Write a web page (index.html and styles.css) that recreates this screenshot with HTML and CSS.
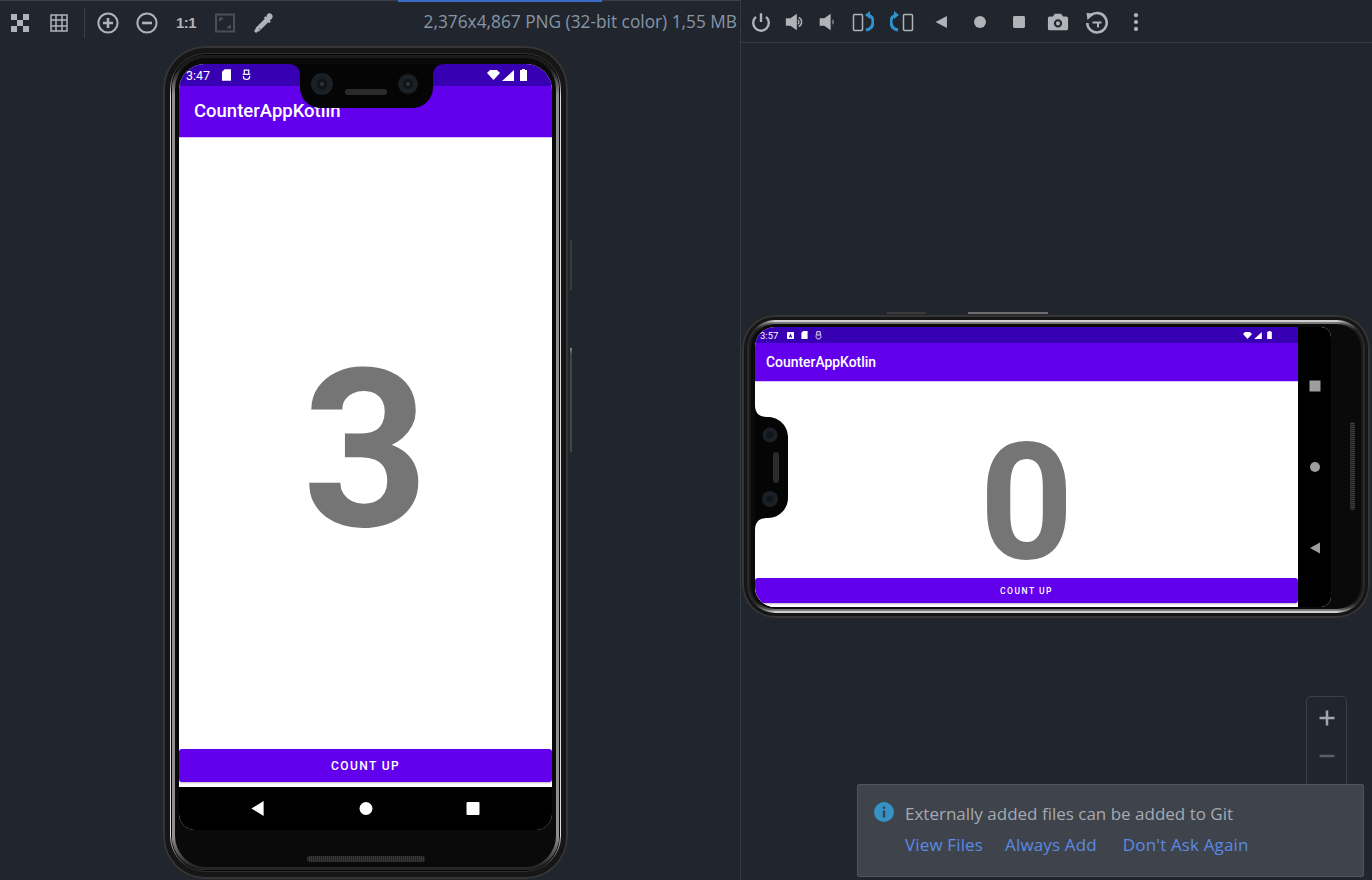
FILE: index.html
```html
<!DOCTYPE html>
<html lang="en">
<head>
<meta charset="utf-8">
<title>Device File Explorer</title>
<link rel="stylesheet" href="styles.css">
</head>
<body>
<div class="app">
  <section class="pane pane-left">
    <div class="accent"></div>
    <header class="toolbar toolbar-left">
      <svg class="tool" viewBox="0 0 24 24"><path class="fill" d="M3 3h6v6H3zM15 3h6v6h-6zM9 9h6v6H9zM3 15h6v6H3zM15 15h6v6h-6z"/></svg>
      <svg class="tool" viewBox="0 0 24 24"><path class="line thin" d="M4 4h16v16H4zM4 9h16M4 15h16M9 4v16M15 4v16"/></svg>
      <span class="sep"></span>
      <svg class="tool" viewBox="0 0 24 24"><circle class="line" cx="12" cy="12" r="9.600"/><path class="line heavy" d="M7 12h10M12 7v10"/></svg>
      <svg class="tool" viewBox="0 0 24 24"><circle class="line" cx="12" cy="12" r="9.600"/><path class="line heavy" d="M7 12h10"/></svg>
      <span class="tool one">1:1</span>
      <svg class="tool" viewBox="0 0 24 24"><path class="dim" d="M3 3.500h18v17H3z"/><path class="dim thin" d="M7 10V7.500h3M17 14v2.500h-3"/></svg>
      <svg class="tool" viewBox="0 0 24 24"><path class="fill" d="M15 3.500c1.500-1.700 3.500-1.500 4.700-.3 1.300 1.300 1.400 3.300-.2 4.800l-1.700 1.600 1 1-1.600 1.600-1-1L8 19.500c-.8.800-1.500 1-2.300 1.100L4 22l-2-2 1.400-1.700c.1-.8.300-1.500 1.100-2.300l8.300-8.200-1-1L13.400 5.200l1 1z"/><path class="cut" d="M7 17.800l.6-.6 1 1-.6.6z"/></svg>
      <span class="image-info">2,376x4,867 PNG (32-bit color) 1,55 MB</span>
    </header>
    <div class="stage stage-left">
      <div class="device portrait">
        <span class="side-key key-a"></span>
        <span class="side-key key-b"></span>
        <div class="band">
          <div class="rim">
            <div class="screen">
              <div class="status">
                <span class="clock">3:47</span>
                <svg class="st st-sd" viewBox="0 0 10 13"><path d="M3 0h7v13H0V3z"/></svg>
                <svg class="st st-usb" viewBox="0 0 10 13"><path d="M2.500 5.500V1h5v4.500M.8 5.800h8.400M1.500 7.500v1c0 2 1.500 3 3.500 3s3.500-1 3.500-3v-1" fill="none" stroke="#fff" stroke-width="1.300"/></svg>
                <span class="spacer"></span>
                <svg class="st st-wifi" viewBox="0 0 13 10"><path d="M0 3l3-3h7l3 3-6.500 7z"/></svg>
                <svg class="st st-signal" viewBox="0 0 12 11"><path d="M12 0v11H0z"/></svg>
                <svg class="st st-battery" viewBox="0 0 7 12"><path d="M2 0h3v1h2v11H0V1h2z"/></svg>
              </div>
              <div class="appbar">CounterAppKotlin</div>
              <main class="content">
                <div class="count">3</div>
                <div class="button">COUNT UP</div>
              </main>
              <nav class="navbar">
                <svg class="nav-icon" viewBox="0 0 14 16"><path d="M13 0v16L0 8z"/></svg>
                <svg class="nav-icon" viewBox="0 0 14 14"><circle cx="7" cy="7" r="6.500"/></svg>
                <svg class="nav-icon" viewBox="0 0 14 14"><rect x=".5" y=".5" width="13" height="13" rx="1"/></svg>
              </nav>
              <svg class="notch" viewBox="0 0 157 46">
                <path d="M0 0c8 0 12 4 12 12v11c0 12 9 21 21 21h91c12 0 21-9 21-21V12c0-8 4-12 12-12z"/>
                <circle class="lens" cx="34" cy="20" r="11"/><circle class="lens-in" cx="34" cy="20" r="5.500"/><circle class="lens-dot" cx="34" cy="20" r="2"/>
                <circle class="lens" cx="120" cy="20" r="10"/><circle class="lens-in" cx="120" cy="20" r="5"/><circle class="lens-dot" cx="120" cy="20" r="2"/>
                <rect class="grille" x="57" y="25" width="42" height="6" rx="3"/>
              </svg>
            </div>
          </div>
        </div>
        <span class="grille-bar bottom-speaker"></span>
      </div>
    </div>
  </section>

  <section class="pane pane-right">
    <header class="toolbar toolbar-right">
      <svg class="ico" viewBox="0 0 24 24"><path class="line heavy" d="M6.500 6.500a8.500 8.500 0 1 0 11 0M12 2.500V12"/></svg>
      <svg class="ico" viewBox="0 0 24 24"><path class="fill" d="M2 8h5l7-5v18l-7-5H2z"/><path class="line thin" d="M16 7a5.500 5.500 0 0 1 0 10M15 9.500a3 3 0 0 1 0 5"/></svg>
      <svg class="ico" viewBox="0 0 24 24"><path class="fill" d="M4 8h5l7-5v18l-7-5H4zM18 9a4 4 0 0 1 0 6z"/></svg>
      <svg class="ico wide" viewBox="0 0 24 24"><rect class="line thin" x="3.500" y="4.500" width="9" height="16" rx="1"/><path class="blue-line" d="M18 5.500c3 0 5 2.500 5 6.500s-2 7-7 8"/><path class="blue" d="M20 1v8l-5-4z"/></svg>
      <svg class="ico wide" viewBox="0 0 24 24"><rect class="line thin" x="13.500" y="4.500" width="9" height="16" rx="1"/><path class="blue-line" d="M6 5.500c-3 0-5 2.500-5 6.500s2 7 7 8"/><path class="blue" d="M4 1v8l5-4z"/></svg>
      <svg class="ico" viewBox="0 0 24 24"><path class="fill" d="M18.500 5.500v13L6 12z"/></svg>
      <svg class="ico" viewBox="0 0 24 24"><circle class="fill" cx="12" cy="12" r="6.500"/></svg>
      <svg class="ico" viewBox="0 0 24 24"><rect class="fill" x="5.500" y="5.500" width="13" height="13" rx="1.500"/></svg>
      <svg class="ico" viewBox="0 0 24 24"><path class="fill" fill-rule="evenodd" d="M8.500 3h7l2 3H21a2 2 0 0 1 2 2v11a2 2 0 0 1-2 2H3a2 2 0 0 1-2-2V8a2 2 0 0 1 2-2h3.500zM12 9a4.500 4.500 0 1 0 0 9 4.500 4.500 0 0 0 0-9zm0 2.300a2.200 2.200 0 1 1 0 4.400 2.200 2.200 0 0 1 0-4.400z"/></svg>
      <svg class="ico wide" viewBox="0 0 24 24"><path class="line heavy" d="M5.500 5.500A9.700 9.700 0 1 1 2.300 13"/><path class="fill" d="M1.500 3l8 .5-7 6.500z"/><path class="line" d="M7.500 12.500h9M13 12.500v5"/></svg>
      <svg class="ico" viewBox="0 0 24 24"><circle class="fill" cx="12" cy="4.500" r="2.300"/><circle class="fill" cx="12" cy="12" r="2.300"/><circle class="fill" cx="12" cy="19.500" r="2.300"/></svg>
    </header>
    <div class="stage stage-right">
      <span class="top-key top-a"></span>
      <span class="top-key top-b"></span>
      <div class="device landscape">
        <div class="band">
          <div class="rim">
            <div class="screen">
              <div class="column">
                <div class="status">
                  <span class="clock">3:57</span>
                  <svg class="st st-a" viewBox="0 0 8 8"><path fill-rule="evenodd" d="M1 0h6a1 1 0 0 1 1 1v6a1 1 0 0 1-1 1H1a1 1 0 0 1-1-1V1a1 1 0 0 1 1-1zm3 1.500L2 6.500h1l.3-.8h1.400l.3.800h1z"/></svg>
                  <svg class="st st-sd" viewBox="0 0 10 13"><path d="M3 0h7v13H0V3z"/></svg>
                  <svg class="st st-usb" viewBox="0 0 10 13"><path d="M2.500 5.500V1h5v4.500M.8 5.800h8.400M1.500 7.500v1c0 2 1.500 3 3.500 3s3.500-1 3.500-3v-1" fill="none" stroke="#fff" stroke-width="1.300"/></svg>
                  <span class="spacer"></span>
                  <svg class="st st-wifi" viewBox="0 0 13 10"><path d="M0 3l3-3h7l3 3-6.500 7z"/></svg>
                  <svg class="st st-signal" viewBox="0 0 12 11"><path d="M12 0v11H0z"/></svg>
                  <svg class="st st-battery" viewBox="0 0 7 12"><path d="M2 0h3v1h2v11H0V1h2z"/></svg>
                </div>
                <div class="appbar">CounterAppKotlin</div>
                <main class="content">
                  <div class="count">0</div>
                  <div class="button">COUNT UP</div>
                </main>
              </div>
              <nav class="navbar">
                <svg class="nav-icon" viewBox="0 0 12 12"><rect x=".5" y=".5" width="11" height="11"/></svg>
                <svg class="nav-icon" viewBox="0 0 12 12"><circle cx="6" cy="6" r="5"/></svg>
                <svg class="nav-icon" viewBox="0 0 12 12"><path d="M11 .5v11L1 6z"/></svg>
              </nav>
              <svg class="notch" viewBox="0 0 33 125">
                <path d="M0 0c0 8 4 12 12 12h1c11 0 20 9 20 20v61c0 11-9 20-20 20h-1c-8 0-12 4-12 12z"/>
                <circle class="lens" cx="15" cy="30" r="7.500"/><circle class="lens-in" cx="15" cy="30" r="3.500"/>
                <circle class="lens" cx="15" cy="94" r="8"/><circle class="lens-in" cx="15" cy="94" r="3.500"/>
                <rect class="grille" x="18" y="47" width="6" height="31" rx="3"/>
              </svg>
            </div>
          </div>
        </div>
        <span class="grille-bar side-speaker"></span>
      </div>
    </div>
    <aside class="zoom-box">
      <svg class="zoom-ico" viewBox="0 0 18 18"><path d="M1.500 9h15M9 1.500v15"/></svg>
      <svg class="zoom-ico minus" viewBox="0 0 18 18"><path d="M1.500 9h15"/></svg>
    </aside>
    <aside class="notice">
      <svg class="info" viewBox="0 0 20 20"><circle cx="10" cy="10" r="10"/><path d="M8.800 4.500h2.400v2.200H8.800zM8.800 8.500h2.400v7H8.800z"/></svg>
      <div class="notice-body">
        <div class="notice-text">Externally added files can be added to Git</div>
        <div class="notice-links"><a>View Files</a><a>Always Add</a><a>Don't Ask Again</a></div>
      </div>
    </aside>
  </section>
</div>
</body>
</html>
```
FILE: styles.css
```css
* { box-sizing: border-box; }
html, body { margin: 0; padding: 0; }
body { width: 1372px; height: 880px; overflow: hidden; background: #21252d; font-family: Roboto, "Liberation Sans", sans-serif; }
svg { display: block; flex: none; }

.app { display: flex; width: 1372px; height: 880px; }
.pane { position: relative; height: 880px; }
.pane-left { width: 741px; flex: none; border-right: 1px solid #343a45; border-top: 1px solid #3a3f49; }
.pane-right { flex: 1; }
.accent { position: absolute; left: 398px; top: -1px; width: 204px; height: 2px; background: #3a6bc4; }

.toolbar { display: flex; align-items: center; }
.toolbar-left { height: 43px; padding-left: 8px; }
.tool { width: 24px; height: 24px; margin-right: 15px; }
.one { display: flex; align-items: center; justify-content: center; font: bold 15px "Liberation Sans", sans-serif; letter-spacing: -.5px; color: #b0b3b8; }
.sep { width: 1px; height: 30px; margin-left: -2px; margin-right: 11px; background: #3a3f48; }
.image-info { position: absolute; right: 3px; top: 10px; font: 17.300px/22px "Open Sans", sans-serif; color: #8795a8; white-space: nowrap; }

.fill { fill: #b0b3b8; }
.line { fill: none; stroke: #b0b3b8; stroke-width: 2; }
.thin { stroke-width: 1.500; }
.heavy { stroke-width: 2.600; }
.dim { fill: none; stroke: #4c5056; stroke-width: 2; }
.cut { fill: #21252d; }
.blue { fill: #2f93cf; }
.blue-line { fill: none; stroke: #2f93cf; stroke-width: 3; }

.toolbar-right { display: grid; grid-template-columns: 34px 34px 30px 40px 40px 38px 40px 38px 40px 38px 40px; justify-content: start; justify-items: center; height: 43px; padding: 1px 0 0 3px; border-bottom: 1px solid #343a45; }
.ico { width: 22px; height: 22px; }
.wide { width: 24px; height: 24px; }

.stage-left { padding: 2px 0 0 163px; }
.stage-right { position: relative; padding: 272px 0 0 1px; }

.device { position: relative; background: #161616; box-shadow: inset 0 0 0 2px #353535; }
.band, .rim { height: 100%; border-style: solid; border-color: transparent; }
.screen { position: relative; overflow: hidden; background: #fff; }

.portrait { width: 405px; height: 833px; padding: 7px; border-radius: 42px; }
.portrait .band { border-width: 1px; padding: 1px; border-radius: 36px; background: linear-gradient(180deg, #303030 18px, #dcdcdc 44px, #dcdcdc calc(100% - 36px), #303030 calc(100% - 6px)) border-box; }
.portrait .rim { border-width: 3px; border-radius: 34px; padding: 6px 4px 37px; box-shadow: 0 0 0 1px #050505; background: linear-gradient(#0a0a0a, #0a0a0a) padding-box, linear-gradient(180deg, #1c1c1c 14px, #8f8f8f 40px, #8f8f8f calc(100% - 34px), #262626 calc(100% - 4px)) border-box; }
.portrait .screen { display: flex; flex-direction: column; width: 373px; height: 766px; border-radius: 26px 26px 16px 16px; }
.portrait .status { height: 22px; padding: 0 25px 0 7px; }
.portrait .clock { font-size: 12.500px; }
.portrait .st-sd { width: 9px; height: 12px; margin-left: 12px; }
.portrait .st-usb { width: 9px; height: 12px; margin-left: 11px; }
.portrait .st-wifi { width: 13px; height: 10px; }
.portrait .st-signal { width: 12px; height: 11px; margin-left: 2px; }
.portrait .st-battery { width: 7px; height: 12px; margin-left: 6px; }
.portrait .appbar { height: 51px; padding-left: 15px; font-size: 18.500px; line-height: 51px; }
.portrait .count { font-size: 220px; line-height: 200px; padding-top: 15px; }
.portrait .button { height: 33px; margin-bottom: 5px; font-size: 12px; letter-spacing: 1.400px; }
.portrait .navbar { flex-direction: row; justify-content: space-between; height: 43px; padding: 0 72px; }
.portrait .nav-icon { width: 14px; height: 15px; }
.portrait .notch { left: 109px; top: 0; width: 157px; height: 46px; }

.side-key { position: absolute; left: 407px; width: 2px; background: #3a3a3a; }
.key-a { top: 194px; height: 50px; }
.key-b { top: 302px; height: 104px; background: linear-gradient(#8a8a8a, #444 6px); }

.status { display: flex; align-items: center; flex: none; background: #3700b3; color: #fff; }
.status svg { fill: #fff; }
.spacer { flex: 1; }
.appbar { flex: none; background: #6200ee; color: #fff; font-weight: 500; box-shadow: 0 1px 0 #d9c6fb; position: relative; }
.content { flex: 1; display: flex; flex-direction: column; background: #fff; min-height: 0; }
.count { flex: 1; display: flex; align-items: center; justify-content: center; font-weight: 700; color: #757575; min-height: 0; }
.button { flex: none; display: flex; align-items: center; justify-content: center; background: #6200ee; color: #fff; font-weight: 500; border-radius: 3px; box-shadow: 0 1px 2px #bbb; }
.navbar { display: flex; align-items: center; flex: none; background: #000; }
.nav-icon { fill: #fff; }
.notch { position: absolute; fill: #050505; }
.lens { fill: #1a2026; }
.lens-in { fill: #11151a; }
.lens-dot { fill: #2e353b; }
.grille { fill: #2b2b2b; }
.grille-bar { position: absolute; background: repeating-linear-gradient(90deg, #3a3a3a 0 1px, #222 1px 2px); }
.bottom-speaker { left: 144px; top: 810px; width: 118px; height: 6px; border-radius: 3px; }

.landscape { width: 628px; height: 303px; padding: 5px; border-radius: 33px; }
.landscape .band { border-width: 2px; border-radius: 28px; background: linear-gradient(90deg, #2a2a2a 8px, #d0d0d0 28px, #d0d0d0 calc(100% - 28px), #2a2a2a calc(100% - 8px)) border-box; }
.landscape .rim { border-width: 2px; border-radius: 26px; padding: 3px 30px 2px 4px; background: linear-gradient(#0a0a0a, #0a0a0a) padding-box, linear-gradient(90deg, #1a1a1a 8px, #7a7a7a 26px, #7a7a7a calc(100% - 26px), #1a1a1a calc(100% - 8px)) border-box; }
.landscape .screen { display: flex; width: 576px; height: 280px; border-radius: 20px 10px 10px 20px; }
.landscape .column { display: flex; flex-direction: column; width: 543px; flex: none; }
.landscape .status { height: 16px; padding: 0 26px 0 5px; }
.landscape .clock { font-size: 9.500px; }
.landscape .st-a { width: 7px; height: 7px; margin-left: 9px; }
.landscape .st-sd { width: 7px; height: 8px; margin-left: 7px; }
.landscape .st-usb { width: 7px; height: 9px; margin-left: 7px; }
.landscape .st-wifi { width: 9px; height: 7px; }
.landscape .st-signal { width: 8px; height: 7px; margin-left: 2px; }
.landscape .st-battery { width: 5px; height: 8px; margin-left: 5px; }
.landscape .appbar { height: 38px; padding-left: 11px; font-size: 13.900px; line-height: 38px; }
.landscape .count { font-size: 164px; line-height: 120px; padding-top: 45px; }
.landscape .button { height: 25px; margin-bottom: 4px; font-size: 8.500px; letter-spacing: 1.500px; }
.landscape .navbar { flex-direction: column; justify-content: space-between; width: 33px; height: 280px; padding: 53px 0 53px; }
.landscape .nav-icon { width: 12px; height: 12px; fill: #9e9e9e; }
.landscape .notch { left: 0; top: 78px; width: 33px; height: 125px; }
.side-speaker { left: 608px; top: 107px; width: 5px; height: 88px; border-radius: 2px; background: repeating-linear-gradient(0deg, #3a3a3a 0 1px, #222 1px 2px); }

.top-key { position: absolute; top: 269px; height: 2px; background: #3a3a3a; }
.top-a { left: 146px; width: 39px; }
.top-b { left: 227px; width: 80px; background: #6e6e6e; }

.zoom-box { position: absolute; left: 565px; top: 696px; width: 41px; height: 92px; display: flex; flex-direction: column; align-items: center; gap: 20px; padding-top: 12px; border: 1px solid #3b3f47; border-radius: 5px; }
.zoom-ico { width: 18px; height: 18px; fill: none; stroke: #a4a6ab; stroke-width: 2.500; }
.zoom-ico.minus { stroke: #5a5d63; }

.notice { position: absolute; left: 116px; top: 784px; width: 507px; height: 93px; display: flex; gap: 11px; padding: 17px 0 0 16px; background: #3e434c; border: 1px solid #50545c; border-radius: 2px; }
.info { width: 20px; height: 20px; fill: #3592c4; }
.info path { fill: #3e434c; }
.notice-body { font: 17px/22px "Open Sans", sans-serif; padding-top: 1px; }
.notice-text { color: #a6aab0; }
.notice-links { display: flex; gap: 22px; margin-top: 9px; color: #5b8ae2; letter-spacing: .15px; }
.notice-links a:last-child { margin-left: 4px; }
```
